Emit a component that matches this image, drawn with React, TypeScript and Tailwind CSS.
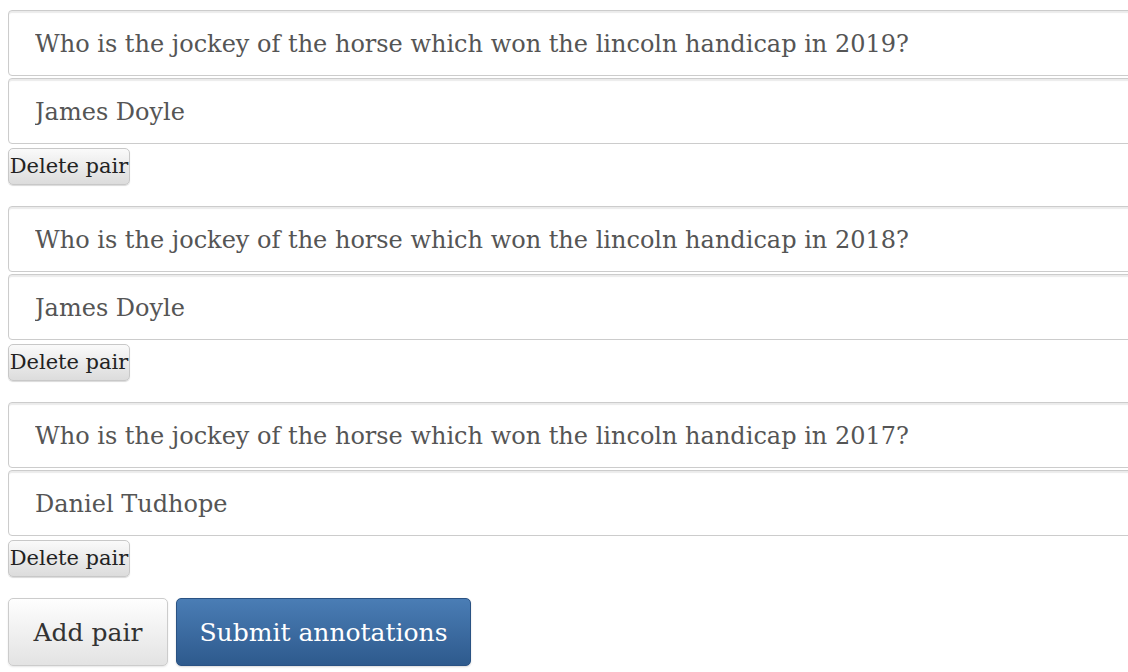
import React from "react";

const pairs = [
  { q: "Who is the jockey of the horse which won the lincoln handicap in 2019?", a: "James Doyle" },
  { q: "Who is the jockey of the horse which won the lincoln handicap in 2018?", a: "James Doyle" },
  { q: "Who is the jockey of the horse which won the lincoln handicap in 2017?", a: "Daniel Tudhope" },
];

const inputCls =
  "block w-[1140px] h-[66px] px-[26px] pt-[2px] text-[24px] text-[#555] bg-white border border-[#ccc] rounded-[4px] shadow-[inset_0_2px_1px_rgba(0,0,0,0.08)] outline-none [font-family:'DejaVu_Serif',Georgia,serif]";

export default function App() {
  return (
    <div className="w-[1128px] h-[672px] overflow-hidden bg-white pl-[8px] pt-[10px] [font-family:'DejaVu_Serif',Georgia,serif]">
      {pairs.map((p, i) => (
        <div key={i} className="mb-[21px]">
          <input className={inputCls} defaultValue={p.q} />
          <input className={inputCls + " mt-[2px]"} defaultValue={p.a} />
          <button className="mt-[4px] h-[37px] w-[122px] px-0 text-[21px] text-[#222] leading-none rounded-[5px] border border-[#c8c8c8] bg-gradient-to-b from-[#fafafa] to-[#dcdcdc] shadow-[0_1px_1px_rgba(0,0,0,0.15)] [font-family:'DejaVu_Serif',Georgia,serif]">
            Delete pair
          </button>
        </div>
      ))}
      <div className="flex gap-[8px]">
        <button className="h-[68px] w-[160px] pt-[2px] text-[25px] text-[#333] rounded-[5px] border border-[#ccc] bg-gradient-to-b from-[#fefefe] to-[#e3e3e3] shadow-[0_1px_2px_rgba(0,0,0,0.1)]">
          Add pair
        </button>
        <button className="h-[68px] w-[295px] pt-[2px] text-[25px] text-white rounded-[5px] border border-[#2a5283] bg-gradient-to-b from-[#4a7db5] to-[#2e5a8d] shadow-[0_1px_2px_rgba(0,0,0,0.15)]">
          Submit annotations
        </button>
      </div>
    </div>
  );
}
